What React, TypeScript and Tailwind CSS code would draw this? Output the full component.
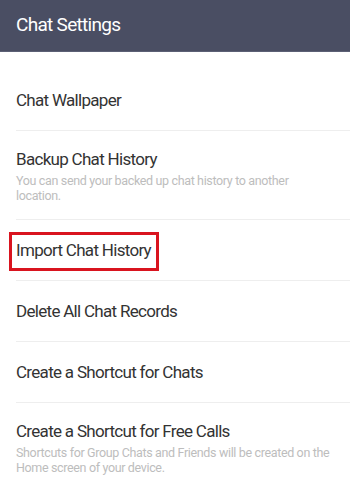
const font = { fontFamily: "Roboto, 'Noto Sans', sans-serif" };

type Item = { title: string; desc?: string; highlight?: boolean };

const items: Item[] = [
  { title: "Chat Wallpaper" },
  {
    title: "Backup Chat History",
    desc: "You can send your backed up chat history to another location.",
  },
  { title: "Import Chat History", highlight: true },
  { title: "Delete All Chat Records" },
  { title: "Create a Shortcut for Chats" },
  {
    title: "Create a Shortcut for Free Calls",
    desc: "Shortcuts for Group Chats and Friends will be created on the Home screen of your device.",
  },
];

function Row({ item, last }: { item: Item; last: boolean }) {
  return (
    <li
      className={`ml-4 ${item.desc ? "py-[16px]" : "py-[18px]"} ${
        last ? "" : "border-b border-[#eeeeee]"
      }`}
    >
      <div
        className={`text-[17px] leading-[24px] tracking-[-0.7px] text-[#333333] ${
          item.highlight ? "relative w-fit" : ""
        }`}
      >
        {item.title}
        {item.highlight && (
          <span className="absolute -left-[7px] -right-[8px] -top-[6px] -bottom-[9px] border-[3px] border-[#d9141f]" />
        )}
      </div>
      {item.desc && (
        <p className="mt-[2px] pr-[18px] text-[12.5px] leading-[15px] tracking-[-0.35px] text-[#bdbdbd]">
          {item.desc}
        </p>
      )}
    </li>
  );
}

export default function App() {
  return (
    <div className="w-[350px] h-[483px] overflow-hidden bg-white" style={font}>
      {/* Header */}
      <header className="h-[52px] bg-[#4a4e63] flex items-center px-4 border-b border-[#5c6075]">
        <h1 className="text-[19px] tracking-[-0.7px] text-white">Chat Settings</h1>
      </header>

      <ul className="pt-[18px]">
        {items.map((item, i) => (
          <Row key={item.title} item={item} last={i === items.length - 1} />
        ))}
      </ul>
    </div>
  );
}
